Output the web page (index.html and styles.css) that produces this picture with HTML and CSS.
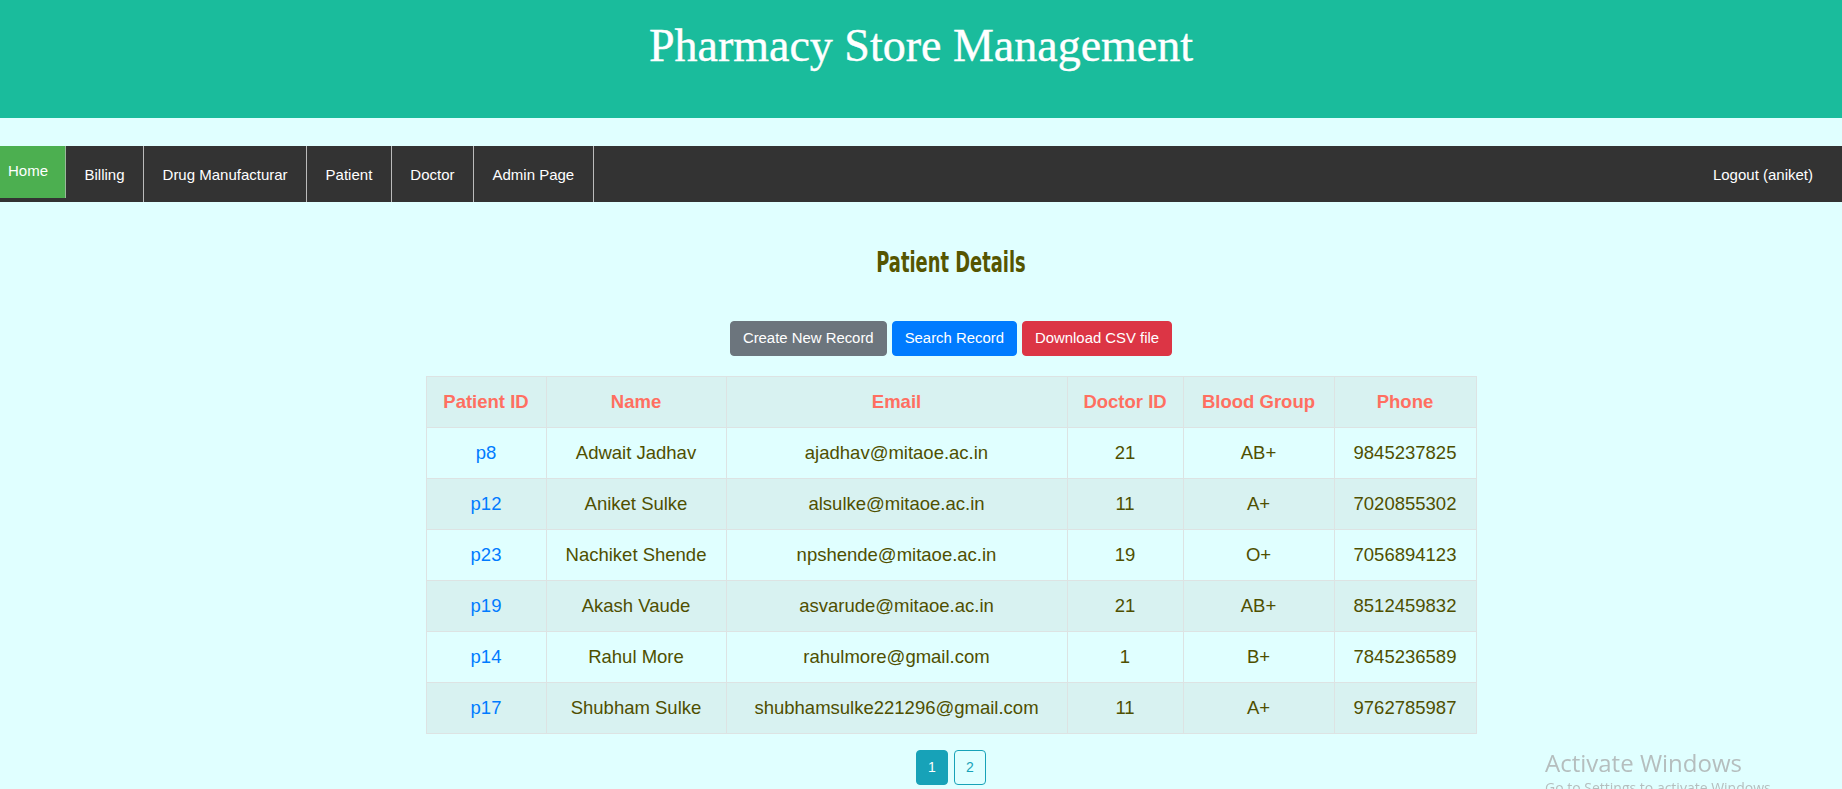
FILE: index.html
```html
<!DOCTYPE html>
<html lang="en">
<head>
<meta charset="utf-8">
<title>Pharmacy Store Management</title>
<link rel="stylesheet" href="styles.css">
</head>
<body>
<header class="site-header">
  <h1 class="site-title">Pharmacy Store Management</h1>
</header>
<nav class="navbar">
  <ul class="nav-list">
    <li class="nav-item active"><a href="#">Home</a></li>
    <li class="nav-item"><a href="#">Billing</a></li>
    <li class="nav-item"><a href="#">Drug Manufacturar</a></li>
    <li class="nav-item"><a href="#">Patient</a></li>
    <li class="nav-item"><a href="#">Doctor</a></li>
    <li class="nav-item"><a href="#">Admin Page</a></li>
  </ul>
  <a class="logout" href="#">Logout (aniket)</a>
</nav>
<main class="content">
  <h2 class="page-title"><span class="page-title-text">Patient Details</span></h2>
  <div class="actions">
    <a class="btn btn-secondary" href="#">Create New Record</a>
    <a class="btn btn-primary" href="#">Search Record</a>
    <a class="btn btn-danger" href="#">Download CSV file</a>
  </div>
  <table class="data-table">
    <colgroup>
      <col class="c-id"><col class="c-name"><col class="c-email"><col class="c-doc"><col class="c-blood"><col class="c-phone">
    </colgroup>
    <tbody>
      <tr class="head-row"><th>Patient ID</th><th>Name</th><th>Email</th><th>Doctor ID</th><th>Blood Group</th><th>Phone</th></tr>
      <tr><td><a href="#">p8</a></td><td>Adwait Jadhav</td><td>ajadhav@mitaoe.ac.in</td><td>21</td><td>AB+</td><td>9845237825</td></tr>
      <tr><td><a href="#">p12</a></td><td>Aniket Sulke</td><td>alsulke@mitaoe.ac.in</td><td>11</td><td>A+</td><td>7020855302</td></tr>
      <tr><td><a href="#">p23</a></td><td>Nachiket Shende</td><td>npshende@mitaoe.ac.in</td><td>19</td><td>O+</td><td>7056894123</td></tr>
      <tr><td><a href="#">p19</a></td><td>Akash Vaude</td><td>asvarude@mitaoe.ac.in</td><td>21</td><td>AB+</td><td>8512459832</td></tr>
      <tr><td><a href="#">p14</a></td><td>Rahul More</td><td>rahulmore@gmail.com</td><td>1</td><td>B+</td><td>7845236589</td></tr>
      <tr><td><a href="#">p17</a></td><td>Shubham Sulke</td><td>shubhamsulke221296@gmail.com</td><td>11</td><td>A+</td><td>9762785987</td></tr>
    </tbody>
  </table>
  <ul class="pagination">
    <li class="page current">1</li>
    <li class="page">2</li>
  </ul>
</main>
<div class="win-watermark">
  <div class="win-title">Activate Windows</div>
  <div class="win-sub">Go to Settings to activate Windows.</div>
</div>
</body>
</html>
```
FILE: styles.css
```css
html, body {
  margin: 0;
  padding: 0;
}
body {
  background: #e0ffff;
  font-family: "Liberation Sans", Arial, sans-serif;
  overflow: hidden;
  height: 789px;
}
.site-header {
  background: #1abc9c;
  height: 118px;
  box-sizing: border-box;
  padding-top: 20px;
}
.site-title {
  margin: 0;
  text-align: center;
  color: #ffffff;
  font-family: "Liberation Serif", "Times New Roman", serif;
  font-weight: normal;
  font-size: 46px;
  line-height: 51px;
  -webkit-text-stroke: 0.4px #ffffff;
}
.navbar {
  margin-top: 28px;
  height: 56px;
  background: #333333;
  display: flex;
  align-items: stretch;
}
.nav-list {
  list-style: none;
  margin: 0;
  padding: 0;
  display: flex;
  align-items: stretch;
}
.nav-item a {
  display: flex;
  align-items: center;
  height: 100%;
  box-sizing: border-box;
  padding: 0 18.5px;
  border-right: 1px solid #bbbbbb;
  color: #ffffff;
  text-decoration: none;
  font-size: 15px;
}
.nav-item.active {
  align-self: flex-start;
  height: 52px;
}
.nav-item.active a {
  background: #4caf50;
  padding: 0 17px 3px 8px;
  border-right-color: #9ab89b;
}
.logout {
  margin-left: auto;
  display: flex;
  align-items: center;
  padding-right: 29px;
  color: #ffffff;
  text-decoration: none;
  font-size: 15px;
}
.content {
  padding-left: 60px;
  text-align: center;
}
.page-title {
  margin: 45px 0 0;
  font-family: "DejaVu Sans", sans-serif;
  font-weight: bold;
  font-size: 27.5px;
  line-height: 30px;
  color: #555500;
}
.page-title-text {
  display: inline-block;
  transform: scaleX(0.65);
}
.actions {
  margin-top: 44px;
  display: flex;
  justify-content: center;
  gap: 5px;
}
.btn {
  display: inline-block;
  padding: 6px 12px;
  border: 1px solid transparent;
  border-radius: 4px;
  font-size: 14.9px;
  line-height: 21px;
  color: #ffffff;
  text-decoration: none;
}
.btn-secondary { background: #6c757d; border-color: #6c757d; }
.btn-primary { background: #007bff; border-color: #007bff; }
.btn-danger { background: #dc3545; border-color: #dc3545; }
.data-table {
  margin: 20px auto 0;
  width: 1050px;
  table-layout: fixed;
  border-collapse: collapse;
  font-size: 18.5px;
}
.c-id { width: 120px; }
.c-name { width: 180px; }
.c-email { width: 341px; }
.c-doc { width: 116px; }
.c-blood { width: 151px; }
.c-phone { width: 142px; }
.data-table th,
.data-table td {
  border: 1px solid #dde3e3;
  padding: 12px 0;
  line-height: 26px;
  text-align: center;
  color: #4f4f00;
  white-space: nowrap;
}
.data-table th {
  color: #ff6f61;
  font-weight: bold;
}
.data-table tr:nth-child(odd) {
  background: #d8f2f1;
}
.data-table a {
  color: #007bff;
  text-decoration: none;
}
.pagination {
  list-style: none;
  margin: 16px 0 0;
  padding: 0;
  display: flex;
  justify-content: center;
  gap: 6px;
}
.page {
  width: 32px;
  height: 35px;
  box-sizing: border-box;
  border: 1px solid #17a2b8;
  border-radius: 4px;
  color: #17a2b8;
  font-size: 14px;
  line-height: 33px;
  text-align: center;
}
.page.current {
  background: #17a2b8;
  color: #ffffff;
}
.win-watermark {
  position: fixed;
  left: 1545px;
  top: 747px;
  color: #b5bebe;
  font-family: "Open Sans", sans-serif;
  white-space: nowrap;
}
.win-title {
  font-size: 24px;
  line-height: 32px;
}
.win-sub {
  font-size: 14px;
  line-height: 20px;
  margin-top: -1px;
}
```
